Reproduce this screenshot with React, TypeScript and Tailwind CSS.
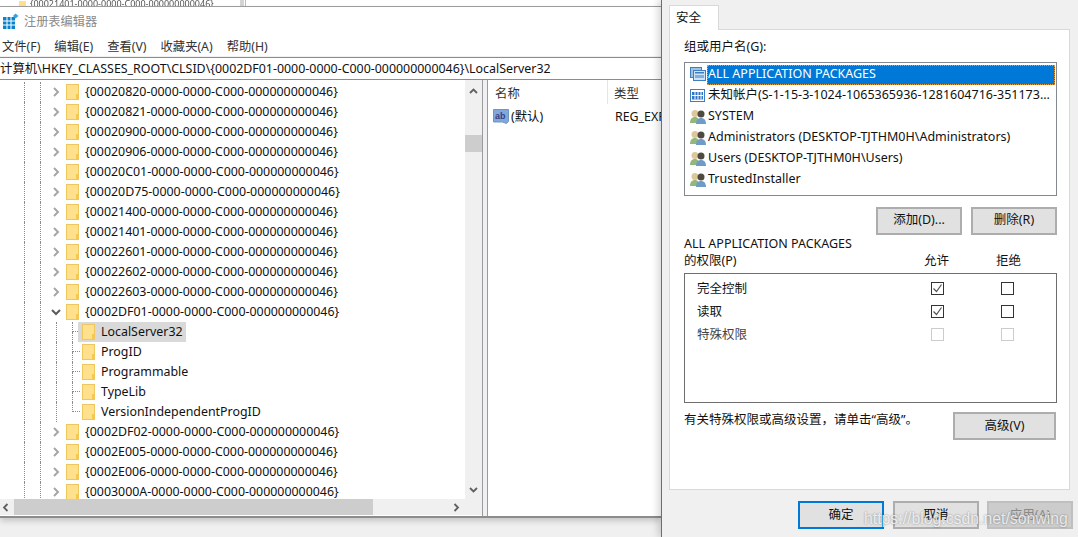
const F = { fontFamily: '"Noto Sans","Noto Sans CJK SC",sans-serif' };

const before = ['{00020820-0000-0000-C000-000000000046}','{00020821-0000-0000-C000-000000000046}','{00020900-0000-0000-C000-000000000046}','{00020906-0000-0000-C000-000000000046}','{00020C01-0000-0000-C000-000000000046}','{00020D75-0000-0000-C000-000000000046}','{00021400-0000-0000-C000-000000000046}','{00021401-0000-0000-C000-000000000046}','{00022601-0000-0000-C000-000000000046}','{00022602-0000-0000-C000-000000000046}','{00022603-0000-0000-C000-000000000046}'];
const after = ['{0002DF02-0000-0000-C000-000000000046}','{0002E005-0000-0000-C000-000000000046}','{0002E006-0000-0000-C000-000000000046}','{0003000A-0000-0000-C000-000000000046}'];
const kids = ['LocalServer32','ProgID','Programmable','TypeLib','VersionIndependentProgID'];

function Folder() {
  return (
    <svg width="13" height="16" viewBox="0 0 13 16" className="shrink-0">
      <rect x="0.5" y="0.5" width="12" height="15" fill="#ffe08c" stroke="#eec75f" />
      <rect x="10" y="10" width="2.5" height="5.5" fill="#f5c94e" />
    </svg>
  );
}
function Chevron({ open }: { open?: boolean }) {
  return (
    <svg width="10" height="10" viewBox="0 0 10 10" className="shrink-0">
      <path d={open ? 'M1 3l4 4 4-4' : 'M3 1l4 4-4 4'} fill="none" stroke={open ? '#5c5c5c' : '#a6a6a6'} strokeWidth="2" />
    </svg>
  );
}
function Guides({ w }: { w: string }) {
  return (
    <>
      <span className="ml-[24px] w-[16px] h-full border-l border-dotted border-[#8a8a8a] shrink-0" />
      <span className={`${w} h-full border-l border-dotted border-[#8a8a8a] shrink-0`} />
    </>
  );
}
function KeyRow({ t, open }: { t: string; open?: boolean }) {
  return (
    <div className="flex h-5 items-center">
      <Guides w="w-[11px]" />
      <span className="w-[15px] flex justify-start shrink-0"><Chevron open={open} /></span>
      <Folder />
      <span className="ml-[6px] whitespace-nowrap">{t}</span>
    </div>
  );
}
function KidRow({ t, i }: { t: string; i: number }) {
  return (
    <div className="flex h-5 items-center">
      <Guides w="w-[16px]" />
      <span className="w-[16px] h-full border-l border-dotted border-[#8a8a8a] shrink-0" />
      <span className={`w-[8px] shrink-0 flex flex-col ${i === 4 ? 'h-1/2 self-start' : 'h-full'}`}>
        <span className={`border-l border-dotted border-[#8a8a8a] w-full ${i === 4 ? 'h-full border-b' : 'h-1/2 border-b'}`} />
        {i !== 4 && <span className="border-l border-dotted border-[#8a8a8a] flex-1" />}
      </span>
      <div className={`flex items-center h-full -ml-[2px] pl-[4px] pr-[3px] ${i === 0 ? 'bg-[#d9d9d9]' : ''}`}>
        <Folder />
        <span className="ml-[6px] whitespace-nowrap">{t}</span>
      </div>
    </div>
  );
}
function People() {
  return (
    <svg width="16" height="15" viewBox="0 0 16 15" className="shrink-0">
      <circle cx="5" cy="4.500" r="3.500" fill="#dcc89a" />
      <path d="M0 14c0-4 2-6 5-6s4 2 4 6z" fill="#93b77c" />
      <circle cx="11" cy="5" r="3.500" fill="#4f4a40" />
      <path d="M6 15c0-4 2-6 5-6s5 2 5 6z" fill="#6f9cc7" />
    </svg>
  );
}
function ListIcon({ i }: { i: number }) {
  if (i === 0) return (
    <svg width="16" height="15" viewBox="0 0 16 15" className="shrink-0">
      <rect x="0.5" y="0.5" width="11" height="10" fill="#9cc3e6" stroke="#3f7fbf" />
      <rect x="3.5" y="3.5" width="12" height="10" fill="#cfe3f5" stroke="#3f7fbf" />
      <rect x="5" y="5" width="9" height="1.500" fill="#3f7fbf" />
      <rect x="5" y="8" width="9" height="3" fill="#7fb0dd" />
    </svg>
  );
  if (i === 1) return (
    <svg width="16" height="13" viewBox="0 0 16 13" className="shrink-0">
      <rect x="0.5" y="0.5" width="14" height="12" fill="#fff" stroke="#3f7fbf" />
      <rect x="2" y="3" width="11" height="7.500" fill="#2f77c4" />
      <path d="M5 3v7.500M8 3v7.500M11 3v7.500M2 6.500h11" stroke="#fff" strokeWidth="1" />
    </svg>
  );
  return <People />;
}
function Btn({ t, w, cls = '' }: { t: string; w: string; cls?: string }) {
  return <div className={`h-[28px] flex items-center justify-center bg-[#e1e1e1] border-2 border-[#adadad] ${w} ${cls}`}>{t}</div>;
}
function Check({ on, dis }: { on?: boolean; dis?: boolean }) {
  return (
    <div className={`w-[13px] h-[13px] border bg-white flex items-center justify-center ${dis ? 'border-[#cccccc]' : 'border-[#333333]'}`}>
      {on && <svg width="11" height="11" viewBox="0 0 11 11"><path d="M1.500 5.500l3 3 5-7" fill="none" stroke="#555" strokeWidth="1.200" /></svg>}
    </div>
  );
}
function PermRow({ t, a, dis }: { t: string; a?: boolean; dis?: boolean }) {
  return (
    <div className="flex h-[23px] items-center">
      <span className={`w-[234px] pt-[2px] ${dis ? 'text-[#444]' : ''}`}>{t}</span>
      <Check on={a} dis={dis} />
      <span className="w-[57px]" />
      <Check dis={dis} />
    </div>
  );
}

const users = ['ALL APPLICATION PACKAGES','未知帐户(S-1-15-3-1024-1065365936-1281604716-351173...','SYSTEM','Administrators (DESKTOP-TJTHM0H\\Administrators)','Users (DESKTOP-TJTHM0H\\Users)','TrustedInstaller'];

export default function App() {
  return (
    <div className="relative flex w-[1078px] h-[537px] overflow-hidden bg-[#f0f0f0] text-[12.4px] text-[#111]" style={F}>
      <div className="w-[661px] shrink-0 flex flex-col">
        <div className="h-[7px] flex overflow-hidden bg-white border-b border-[#a0a0a0] shrink-0">
          <div className="w-[240px] flex pl-[19px] items-end text-[9px] text-[#555] leading-none">
            <span className="w-[7px] h-[5px] bg-[#ffe08c] mr-[4px]" />
            <span className="blur-[0.5px] -mb-[2px]">{'{00021401-0000-0000-C000-000000000046}'}</span>
          </div>
          <div className="w-[4px] bg-[#d4d4d4]" />
          <div className="flex-1 border-l border-[#bbbbbb] ml-[1px]" />
        </div>
        <div className="h-[511px] shrink-0 bg-white flex flex-col border-b-2 border-[#8c8c8c] shadow-[0_3px_6px_rgba(0,0,0,0.18)]">
          <div className="h-[28px] flex items-center pl-[3px] shrink-0">
            <svg width="16" height="17" viewBox="0 0 16 17" className="shrink-0">
              <rect x="0" y="4" width="12" height="12" fill="#0a84c9" />
              <path d="M4 4v12M8 4v12M0 8h12M0 12h12" stroke="#fff" strokeWidth="1" />
              <path d="M12.500 0.500l3 2.500-3 2.500-2.500-2.500z" fill="#37a3e0" />
            </svg>
            <span className="ml-[5px] pt-[2px] text-[#8a8a8a] text-[12.200px]">注册表编辑器</span>
          </div>
          <div className="h-[21px] flex items-center pl-[2px] pt-[3px] gap-[14px] bg-white shrink-0 text-[12.300px] text-[#333]">
            <span>文件(F)</span><span>编辑(E)</span><span>查看(V)</span><span>收藏夹(A)</span><span>帮助(H)</span>
          </div>
          <div className="h-[1px] bg-[#f0f0f0] shrink-0" />
          <div className="h-[23px] border-y border-[#8c8c8c] pt-[1px] flex items-center whitespace-nowrap overflow-hidden shrink-0">
            计算机\HKEY_CLASSES_ROOT\CLSID\{'{0002DF01-0000-0000-C000-000000000046}'}\LocalServer32
          </div>
          <div className="flex-1 flex min-h-0">
            <div className="w-[482px] shrink-0 flex flex-col">
              <div className="flex flex-1 min-h-0">
                <div className="w-[465px] overflow-hidden">
                  <div className="pt-[2px]">
                    {before.map((t) => <KeyRow key={t} t={t} />)}
                    <KeyRow t="{0002DF01-0000-0000-C000-000000000046}" open />
                    {kids.map((t, i) => <KidRow key={t} t={t} i={i} />)}
                    {after.map((t) => <KeyRow key={t} t={t} />)}
                  </div>
                </div>
                <div className="w-[17px] bg-[#f0f0f0] flex flex-col items-center justify-between pt-[8px] pb-[6px] relative">
                  <svg width="9" height="6" viewBox="0 0 9 6"><path d="M1 5l3.500-3.500L8 5" fill="none" stroke="#606060" strokeWidth="1.800" /></svg>
                  <div className="absolute top-[55px] left-0 w-full h-[17px] bg-[#cdcdcd]" />
                  <svg width="9" height="6" viewBox="0 0 9 6"><path d="M1 1l3.500 3.500L8 1" fill="none" stroke="#606060" strokeWidth="1.800" /></svg>
                </div>
              </div>
              <div className="h-[16px] bg-[#f0f0f0] flex items-center shrink-0 mb-[1px]">
                <span className="w-[14px] pl-[2px] flex"><svg width="7" height="9" viewBox="0 0 7 9"><path d="M5.500 1L2 4.500 5.500 8" fill="none" stroke="#606060" strokeWidth="1.800" /></svg></span>
                <span className="w-[359px] h-full bg-[#cdcdcd]" />
                <span className="w-[92px] flex justify-end pr-[5px]"><svg width="7" height="9" viewBox="0 0 7 9"><path d="M1.500 1L5 4.500 1.500 8" fill="none" stroke="#606060" strokeWidth="1.800" /></svg></span>
              </div>
            </div>
            <div className="w-[6px] shrink-0 bg-[#f0f0f0] border-x border-[#9a9a9f]" />
            <div className="flex-1 overflow-hidden">
              <div className="h-[24px] flex items-center whitespace-nowrap text-[#333]">
                <span className="w-[120px] pl-[7px] pt-[5px] border-r border-[#e5e5e5] h-full flex items-center">名称</span>
                <span className="pl-[6px] pt-[5px]">类型</span>
              </div>
              <div className="h-[20px] mt-[3px] pt-[1px] flex items-center whitespace-nowrap">
                <span className="w-[120px] pl-[5px] flex items-center shrink-0">
                  <svg width="16" height="16" viewBox="0 0 16 16" className="shrink-0">
                    <path d="M0.500 0.500h15v12l-2 2-4-1.500h-9z" fill="#7fa8dc" stroke="#6e95c4" />
                    <text x="2" y="10" fontSize="9" fontWeight="700" fill="#3a3f85" fontFamily="Liberation Sans">ab</text>
                  </svg>
                  <span className="ml-[2px]">(默认)</span>
                </span>
                <span className="pl-[7px]">REG_EXPAND_SZ</span>
              </div>
            </div>
          </div>
        </div>
      </div>
      <div className="flex-1 border-l border-[#6e6e6e] flex flex-col pl-[7px] pr-[8px] pt-[5px] relative z-10 shadow-[-3px_0_7px_rgba(0,0,0,0.16)] bg-[#f0f0f0] text-[12.500px]">
        <div className="w-[50px] h-[25px] bg-white border border-b-0 border-[#d9d9d9] flex items-center pl-[6px] relative z-10 -mb-px">安全</div>
        <div className="w-[401px] h-[461px] bg-white border border-[#d9d9d9] pl-[14px] pr-[12px] pt-[8px] flex flex-col">
          <div className="h-[18px] flex items-center">组或用户名(G):</div>
          <div className="mt-[6px] h-[134px] border border-[#828790] p-[1px] flex flex-col">
            {users.map((u, i) => (
              <div key={u} className="h-[21px] flex items-center pl-[4px] whitespace-nowrap">
                <ListIcon i={i} />
                <span className={`ml-[1px] pl-[1px] h-[20px] flex items-center ${i === 0 ? 'flex-1 bg-[#0078d7] text-white outline-dotted outline-1 outline-[#e89a3c] -outline-offset-1' : ''}`}>{u}</span>
              </div>
            ))}
          </div>
          <div className="mt-[11px] flex justify-end gap-[9px]">
            <Btn t="添加(D)..." w="w-[86px]" cls="pb-[1px]" />
            <Btn t="删除(R)" w="w-[86px]" cls="pb-[1px]" />
          </div>
          <div className="h-[18px] flex items-center">ALL APPLICATION PACKAGES</div>
          <div className="h-[17px] flex items-center">
            <span className="w-[240px]">的权限(P)</span>
            <span className="w-[72px]">允许</span>
            <span>拒绝</span>
          </div>
          <div className="mt-[3px] h-[130px] border border-[#6e6e6e] pl-[12px] pt-[3px]">
            <PermRow t="完全控制" a />
            <PermRow t="读取" a />
            <PermRow t="特殊权限" dis />
          </div>
          <div className="mt-[9px] flex justify-between pr-[1px]">
            <span className="h-[16px] leading-[16px]">有关特殊权限或高级设置，请单击“高级”。</span>
            <Btn t="高级(V)" w="w-[103px]" />
          </div>
        </div>
        <div className="mt-[11px] flex -mr-[3px] justify-end">
          <Btn t="确定" w="w-[86px]" cls="!border-[#0078d7] pt-[1px]" />
          <Btn t="取消" w="w-[86px] ml-[9px]" cls="pt-[1px]" />
          <Btn t="应用(A)" w="w-[86px] ml-[8px]" cls="pt-[1px] !bg-[#cccccc] !border-[#bfbfbf] !text-[#8a8a8a]" />
        </div>
        <span className="absolute left-[202px] top-[507px] text-[15.800px] text-white/80 whitespace-nowrap [text-shadow:0_0_2px_rgba(0,0,0,0.45)]" style={{ fontFamily: '"Liberation Sans",sans-serif' }}>https://blog.csdn.net/sonwing</span>
      </div>
    </div>
  );
}
